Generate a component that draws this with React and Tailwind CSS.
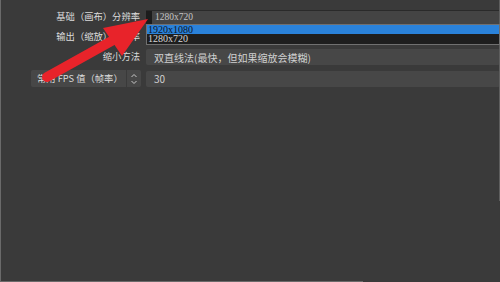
import React from "react";

const cjk = { fontFamily: '"Noto Sans CJK SC", "Noto Sans", sans-serif' };
const mono = { fontFamily: '"Liberation Serif", "Noto Sans CJK SC", serif' };

function Label({ children }) {
  return (
    <div className="w-[145px] shrink-0 pr-[6px] text-right text-[9.3px] leading-none text-[#dcdcdc] whitespace-nowrap">
      {children}
    </div>
  );
}

function Field({ children, className = "" }) {
  return (
    <div
      className={`flex h-[16px] flex-1 items-center rounded-[2px] bg-[#474747] pl-[8px] text-[10px] text-[#d0d0d0] ${className}`}
    >
      {children}
    </div>
  );
}

function Arrow() {
  return (
    <svg
      className="pointer-events-none absolute left-0 top-0"
      width="500"
      height="282"
      viewBox="0 0 500 282"
    >
      <line
        x1="46"
        y1="77"
        x2="116"
        y2="38"
        stroke="#e8232a"
        strokeWidth="10"
        strokeLinecap="round"
      />
      <polygon points="147,19 102,28 121,56" fill="#e8232a" />
    </svg>
  );
}

function Spinner() {
  return (
    <svg width="8" height="12" viewBox="0 0 8 12" fill="none" stroke="#c8c8c8" strokeWidth="1">
      <polyline points="1.5,4 4,1.5 6.5,4" />
      <polyline points="1.5,8 4,10.5 6.5,8" />
    </svg>
  );
}

export default function App() {
  return (
    <main
      className="relative h-[282px] w-[500px] overflow-hidden border-l border-[#6a6a6a] bg-[#3a3a3a]"
      style={cjk}
    >
      <div className="absolute right-0 top-0 h-[201px] w-px bg-[#5e5e5e]" />
      <div className="absolute bottom-0 left-0 h-px w-[362px] bg-[#6a6a6a]" />

      <div className="flex flex-col pt-[10px]">
        <div className="flex items-center">
          <Label>基础（画布）分辨率</Label>
          <div className="flex h-[14px] flex-1 border-t border-[#2a2a2a]">
            <div className="w-[6px] bg-[#1c1c1c]" />
            <div className="flex flex-1 items-center bg-[#444444] pl-[3px] text-[9.5px] text-[#c4c4c4]" style={mono}>
              1280x720
            </div>
          </div>
        </div>

        <div className="mt-[5px] flex items-center">
          <Label>输出（缩放）分辨率</Label>
          <Field />
        </div>

        <div className="mt-[4px] flex items-center">
          <Label>缩小方法</Label>
          <Field>双直线法(最快，但如果缩放会模糊)</Field>
        </div>

        <div className="mt-[5px] flex items-center">
          <div className="w-[145px] shrink-0 pl-[30px] pr-[5px]">
            <div className="flex h-[17px] items-center rounded-[2px] bg-[#474747] text-[9.3px] text-[#dcdcdc]">
              <span className="flex-1 pl-[6px] whitespace-nowrap">常用 FPS 值（帧率）</span>
              <span className="flex h-full w-[15px] items-center justify-center border-l border-[#3a3a3a]">
                <Spinner />
              </span>
            </div>
          </div>
          <Field>30</Field>
        </div>
      </div>

      <div className="absolute left-[145px] right-0 top-[24px] flex flex-col border border-[#707070] bg-[#1e1e1e] text-[10px] leading-none" style={mono}>
        <div className="flex h-[9px] items-center bg-[#2a82da] pl-[1px] text-[#0c1428]">1920x1080</div>
        <div className="flex h-[10px] items-center pl-[1px] text-[#d8d8d8]">1280x720</div>
      </div>

      <Arrow />
    </main>
  );
}
